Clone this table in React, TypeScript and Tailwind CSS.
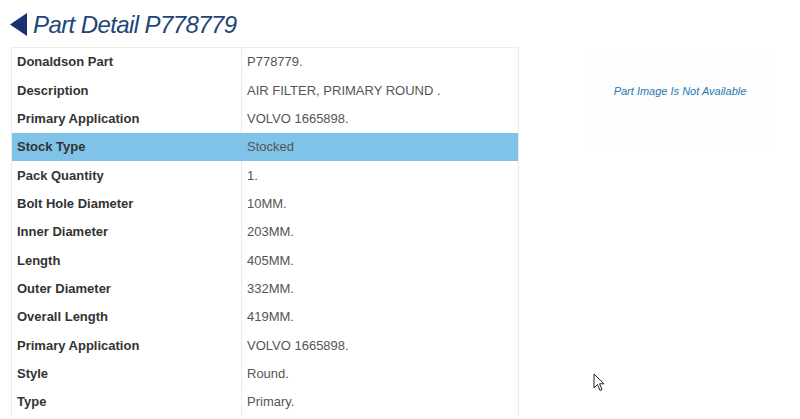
import React from "react";

const rows: { label: string; value: string; active?: boolean }[] = [
  { label: "Donaldson Part", value: "P778779." },
  { label: "Description", value: "AIR FILTER, PRIMARY ROUND ." },
  { label: "Primary Application", value: "VOLVO 1665898." },
  { label: "Stock Type", value: "Stocked", active: true },
  { label: "Pack Quantity", value: "1." },
  { label: "Bolt Hole Diameter", value: "10MM." },
  { label: "Inner Diameter", value: "203MM." },
  { label: "Length", value: "405MM." },
  { label: "Outer Diameter", value: "332MM." },
  { label: "Overall Length", value: "419MM." },
  { label: "Primary Application", value: "VOLVO 1665898." },
  { label: "Style", value: "Round." },
  { label: "Type", value: "Primary." },
];

const App: React.FC = () => (
  <div className="relative w-[800px] h-[419px] overflow-hidden bg-white font-['Liberation_Sans',Arial,sans-serif]">
    <div className="flex pl-[10px]">
      <div className="flex flex-col">
        <div className="flex items-center h-[47px] pt-[2px]">
          <svg width="18" height="23" viewBox="0 0 18 23" className="mr-[5px]">
            <polygon points="0,11.5 17,0 17,23" fill="#1c2f6e" />
          </svg>
          <h1 className="italic text-[24px] leading-none tracking-[-0.6px] text-[#1d4577]">
            Part Detail P778779
          </h1>
        </div>
        <div className="ml-[1px] w-[508px] border border-[#ececec] border-b-0">
          {rows.map((row, i) => (
            <div
              key={i}
              className={`flex h-[28.33px] items-center text-[13px] ${row.active ? "bg-[#7fc3e9]" : ""}`}
            >
              <div
                className={`w-[230px] h-full flex items-center pl-[5px] font-bold text-[#333333] border-r ${row.active ? "border-[#7fc3e9]" : "border-[#ececec]"}`}
              >
                {row.label}
              </div>
              <div className="flex-1 h-full flex items-center pl-[5px] text-[#555555]">
                {row.value}
              </div>
            </div>
          ))}
        </div>
      </div>
      <div className="ml-[72px] mt-[50px] w-[178px] h-[102px] bg-[#fdfdfd] flex justify-center pt-[35px]">
        <span className="italic text-[11px] leading-[13px] text-[#2579b3]">Part Image Is Not Available</span>
      </div>
    </div>
    <svg
      width="13"
      height="20"
      viewBox="0 0 13 20"
      className="absolute left-[593px] top-[373px]"
    >
      <path
        d="M1 1 L1 15 L4.5 11.5 L7 17.5 L9 16.5 L6.5 10.8 L11 10.8 Z"
        fill="#ffffff"
        stroke="#222222"
        strokeWidth="1"
        strokeLinejoin="round"
      />
    </svg>
  </div>
);

export default App;
